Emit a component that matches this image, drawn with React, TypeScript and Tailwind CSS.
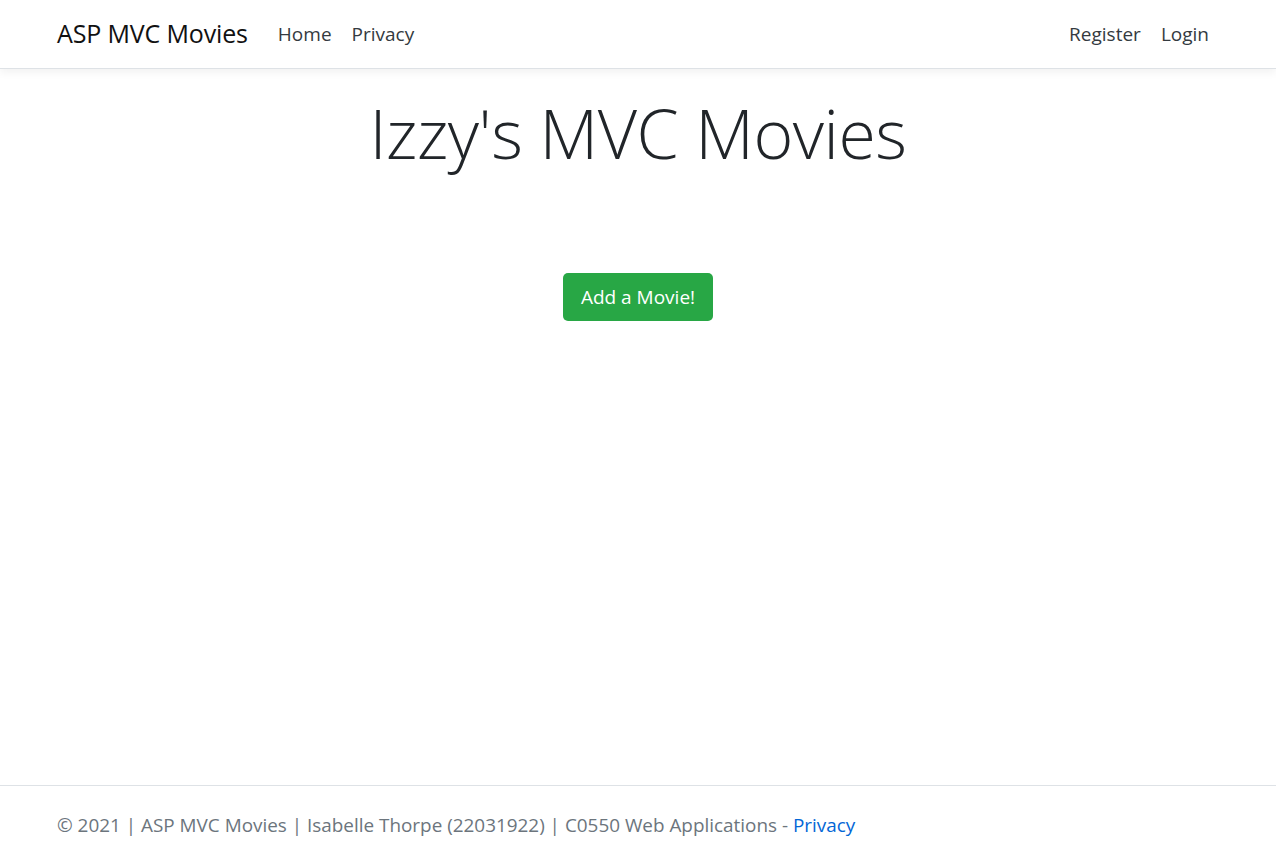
import React from "react";

export default function App() {
  const font = { fontFamily: '"Open Sans", "Noto Sans", sans-serif' };
  return (
    <div className="flex h-[856px] flex-col bg-white text-[#212529]" style={font}>
      <nav className="h-[69px] shrink-0 border-b border-[#dee2e6] bg-white shadow-[0_4px_8px_rgba(0,0,0,0.05)]">
        <div className="mx-auto flex h-[68px] w-[1200px] items-center justify-between px-[19px]">
          <div className="flex items-center">
            <a className="mr-[20px] text-[25px] tracking-[-0.15px] text-[#111]">ASP MVC Movies</a>
            <a className="px-[10px] text-[19px] text-[#343a40]">Home</a>
            <a className="px-[10px] text-[19px] text-[#343a40]">Privacy</a>
          </div>
          <div className="flex items-center">
            <a className="px-[10px] text-[19px] text-[#343a40]">Register</a>
            <a className="px-[10px] text-[19px] text-[#343a40]">Login</a>
          </div>
        </div>
      </nav>
      <main className="flex flex-1 flex-col items-center pt-[22px]">
        <h1 className="text-[68px] font-light leading-[84px] tracking-[-0.5px] text-[#212529]">Izzy's MVC Movies</h1>
        <button className="mt-[98px] h-[48px] w-[150px] rounded-[5px] bg-[#28a745] text-[19px] text-white">
          Add a Movie!
        </button>
      </main>
      <footer className="h-[71px] shrink-0 border-t border-[#dee2e6]">
        <div className="mx-auto flex h-[70px] w-[1200px] items-center px-[19px] pt-[8px] text-[18.9px] text-[#6c757d]">
          <span>
            © 2021 | ASP MVC Movies | Isabelle Thorpe (22031922) | C0550 Web Applications -{" "}
            <a className="text-[#0366d6]">Privacy</a>
          </span>
        </div>
      </footer>
    </div>
  );
}
